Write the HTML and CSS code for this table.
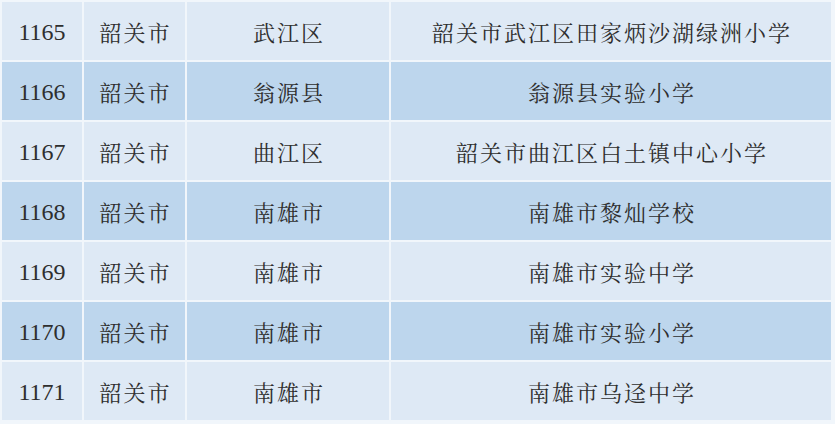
FILE: index.html
```html
<!DOCTYPE html>
<html lang="zh">
<head>
<meta charset="utf-8">
<link rel="stylesheet" href="styles.css">
</head>
<body>
<table class="list">
  <colgroup>
    <col class="c-no"><col class="c-city"><col class="c-dist"><col class="c-school">
  </colgroup>
  <tbody>
    <tr class="light"><td class="num">1165</td><td>韶关市</td><td>武江区</td><td>韶关市武江区田家炳沙湖绿洲小学</td></tr>
    <tr class="dark"><td class="num">1166</td><td>韶关市</td><td>翁源县</td><td>翁源县实验小学</td></tr>
    <tr class="light"><td class="num">1167</td><td>韶关市</td><td>曲江区</td><td>韶关市曲江区白土镇中心小学</td></tr>
    <tr class="dark"><td class="num">1168</td><td>韶关市</td><td>南雄市</td><td>南雄市黎灿学校</td></tr>
    <tr class="light"><td class="num">1169</td><td>韶关市</td><td>南雄市</td><td>南雄市实验中学</td></tr>
    <tr class="dark"><td class="num">1170</td><td>韶关市</td><td>南雄市</td><td>南雄市实验小学</td></tr>
    <tr class="light"><td class="num">1171</td><td>韶关市</td><td>南雄市</td><td>南雄市乌迳中学</td></tr>
  </tbody>
</table>
</body>
</html>
```
FILE: styles.css
```css
html, body {
  margin: 0;
  padding: 0;
  background: #f1f6fb;
}
.list {
  border-collapse: separate;
  border-spacing: 2px;
  table-layout: fixed;
  width: 833px;
  color: #2e2e2e;
  font-family: "Noto Serif CJK SC", "Noto Sans CJK SC", serif;
  font-size: 22px;
}
.c-no { width: 80px; }
.c-city { width: 101px; }
.c-dist { width: 202px; }
.c-school { width: 440px; }
.list td {
  height: 56px;
  padding: 2px 0 0;
  text-align: center;
  vertical-align: middle;
  letter-spacing: 2px;
  text-indent: 2px;
  white-space: nowrap;
  line-height: 24px;
}
.list td.num {
  font-family: "Liberation Serif", serif;
  font-size: 24px;
  letter-spacing: 0;
  text-indent: 0;
}
.light td { background: #dee9f5; }
.dark td { background: #bdd6ed; }
```
